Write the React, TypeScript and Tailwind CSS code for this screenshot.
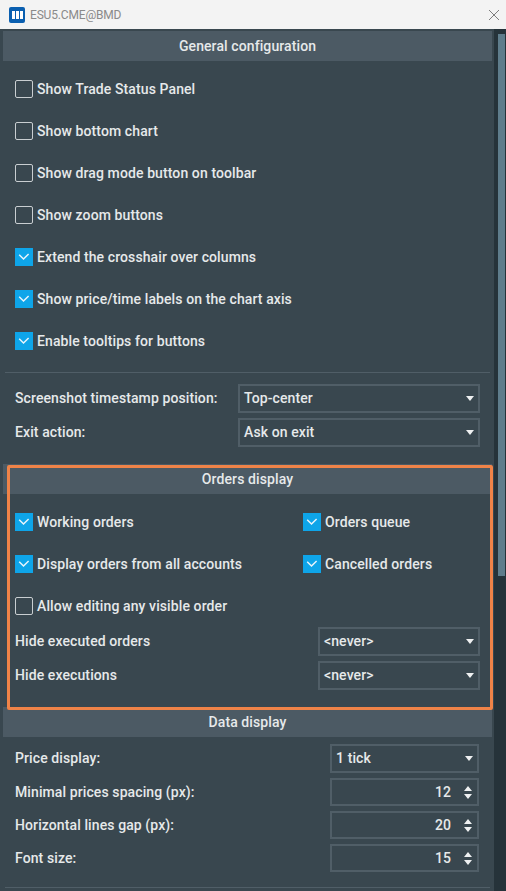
import type { ReactNode } from "react";

const font = "font-['Roboto','Liberation_Sans',sans-serif]";

function Box({ checked, label }: { checked?: boolean; label: string }) {
  return (
    <div className="flex items-center gap-[4px] h-[18px]">
      {checked ? (
        <span className="w-[18px] h-[18px] bg-[#0ea5e9] flex items-center justify-center">
          <svg width="12" height="12" viewBox="0 0 12 12" fill="none" stroke="#e8f4fb" strokeWidth="1.5">
            <path d="M1.2 3.8L5.5 8L10.6 3" />
          </svg>
        </span>
      ) : (
        <span className="w-[18px] h-[18px] border border-[#c9ced1] rounded-[2px]" />
      )}
      <span className="text-[14px] font-medium tracking-[0.1px] text-[#e6e9ea] leading-[18px]">{label}</span>
    </div>
  );
}

function Header({ title }: { title: string }) {
  return (
    <div className="h-[30px] bg-[#4c5a64] flex items-center justify-center text-[14px] font-medium tracking-[0.1px] text-[#e6e9ea]">
      {title}
    </div>
  );
}

function Select({ value, className }: { value: string; className: string }) {
  return (
    <div className={`h-[29px] border-2 border-[#505e67] flex items-center justify-between pl-[4px] pr-[4px] text-[14px] font-medium tracking-[0.1px] text-[#e6e9ea] ${className}`}>
      <span>{value}</span>
      <svg width="8" height="5" viewBox="0 0 8 5" fill="#eef0f1"><path d="M0 0h8L4 5z" /></svg>
    </div>
  );
}

function Spin({ value }: { value: string }) {
  return (
    <div className="w-[149px] h-[28px] border-2 border-[#505e67] flex items-center justify-end pr-[5px] gap-[13px] text-[14px] font-medium tracking-[0.1px] text-[#e6e9ea]">
      <span>{value}</span>
      <svg width="8" height="13" viewBox="0 0 8 13" fill="#eef0f1"><path d="M0 5L4 0l4 5zM0 8h8l-4 5z" /></svg>
    </div>
  );
}

function Row({ label, children }: { label: string; children: ReactNode }) {
  return (
    <div className="flex items-center justify-between">
      <span className="text-[14px] font-medium tracking-[0.1px] text-[#e6e9ea]">{label}</span>
      {children}
    </div>
  );
}

export default function App() {
  return (
    <div className={`w-[506px] h-[891px] overflow-hidden flex flex-col bg-[#39474f] ${font}`}>
      <div className="h-[29px] shrink-0 bg-[#f3f3f3] flex items-center justify-between pl-[9px] pr-[7px]">
        <div className="flex items-center gap-[5px]">
          <span className="w-[16px] h-[16px] rounded-[2px] bg-[#0a5fb0] flex items-center justify-center gap-[1px]">
            <span className="w-[3px] h-[8px] bg-white" />
            <span className="w-[3px] h-[8px] bg-white" />
            <span className="w-[3px] h-[8px] bg-white" />
          </span>
          <span className="text-[12px] tracking-[-0.17px] text-[#8a8a8a]">ESU5.CME@BMD</span>
        </div>
        <svg width="10" height="10" viewBox="0 0 10 10" fill="none" stroke="#7d7d7d" strokeWidth="1">
          <path d="M0 0l10 10M10 0L0 10" />
        </svg>
      </div>

      <div className="flex-1 flex min-h-0">
        <div className="w-[494px] shrink-0 pl-[3px] pr-[2px] pt-[2px]">
          <Header title="General configuration" />
          <div className="flex flex-col gap-[24px] pl-[12px] pt-[19px]">
            <Box label="Show Trade Status Panel" />
            <Box label="Show bottom chart" />
            <Box label="Show drag mode button on toolbar" />
            <Box label="Show zoom buttons" />
            <Box checked label="Extend the crosshair over columns" />
            <Box checked label="Show price/time labels on the chart axis" />
            <Box checked label="Enable tooltips for buttons" />
          </div>
          <div className="h-px bg-[#505e67] mx-[2px] mt-[22px]" />
          <div className="flex flex-col gap-[5px] pl-[12px] pr-[12px] pt-[11px]">
            <Row label="Screenshot timestamp position:"><Select value="Top-center" className="w-[242px]" /></Row>
            <Row label="Exit action:"><Select value="Ask on exit" className="w-[242px]" /></Row>
          </div>

          <div className="mt-[17px] h-[243px] relative">
            <Header title="Orders display" />
            <div className="pl-[12px] pr-[12px] pt-[19px]">
              <div className="grid grid-cols-[288px_1fr] gap-y-[24px]">
                <Box checked label="Working orders" />
                <Box checked label="Orders queue" />
                <Box checked label="Display orders from all accounts" />
                <Box checked label="Cancelled orders" />
                <Box label="Allow editing any visible order" />
              </div>
              <div className="flex flex-col gap-[5px] mt-[12px]">
                <Row label="Hide executed orders"><Select value="<never>" className="w-[162px]" /></Row>
                <Row label="Hide executions"><Select value="<never>" className="w-[162px]" /></Row>
              </div>
            </div>
            <div className="absolute left-[4px] right-[-1px] top-[1px] bottom-[-3px] border-[3px] border-[#ef8348] rounded-[2px] pointer-events-none" />
          </div>

          <Header title="Data display" />
          <div className="flex flex-col gap-[5px] pl-[12px] pr-[13px] pt-[7px]">
            <Row label="Price display:"><Select value="1 tick" className="w-[149px]" /></Row>
            <Row label="Minimal prices spacing (px):"><Spin value="12" /></Row>
            <Row label="Horizontal lines gap (px):"><Spin value="20" /></Row>
            <Row label="Font size:"><Spin value="15" /></Row>
          </div>
          <div className="h-px bg-[#505e67] mx-[2px] mt-[15px]" />
        </div>
        <div className="flex-1 bg-[#26333a] pl-[4px] pt-[5px]">
          <div className="w-[7px] h-[542px] bg-[#5f7d8c]" />
        </div>
      </div>
    </div>
  );
}
